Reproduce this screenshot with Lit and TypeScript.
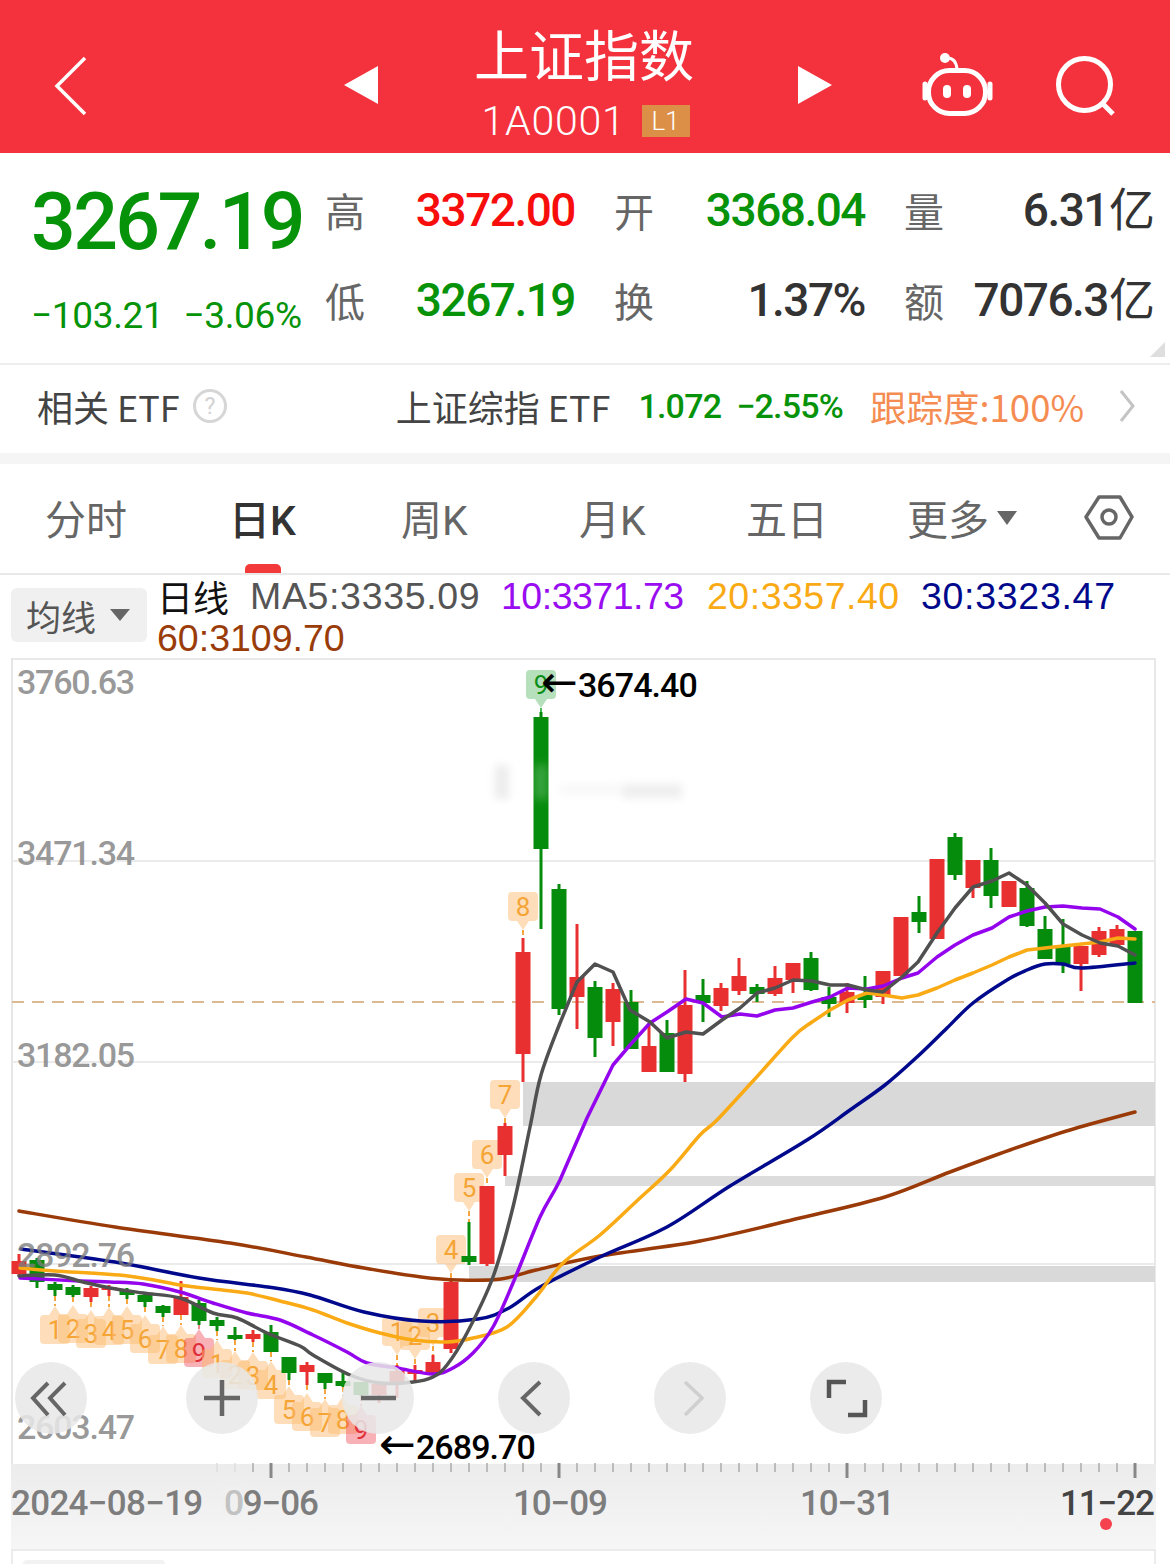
import { LitElement, html, css, svg } from "lit";
import { customElement } from "lit/decorators.js";

type Candle = [number, number, number, number, number]; // up(1)/down(0), bodyTop, bodyBottom, wickTop, wickBottom
const C: Candle[] = [
  [1,1261,1274,1254,1276],[0,1260,1282,1258,1288],[0,1284,1290,1282,1296],[0,1287,1295,1285,1297],[1,1288,1297,1286,1302],
  [1,1287,1290,1285,1296],[0,1290,1295,1288,1299],[0,1295,1302,1292,1307],[0,1306,1313,1305,1317],[1,1297,1315,1281,1315],
  [0,1303,1321,1300,1325],[0,1320,1326,1317,1331],[0,1335,1339,1327,1340],[1,1334,1339,1330,1342],[0,1332,1352,1325,1352],
  [0,1357,1373,1357,1380],[1,1365,1372,1362,1385],[0,1373,1383,1373,1389],[0,1381,1386,1373,1387],[0,1382,1395,1382,1396],
  [1,1384,1395,1384,1403],[1,1371,1383,1365,1398],[1,1370,1374,1365,1383],[1,1362,1373,1355,1375],[1,1282,1349,1279,1353],
  [0,1256,1262,1222,1265],[1,1186,1264,1186,1266],[1,1126,1155,1123,1176],[1,952,1054,938,1082],[0,717,849,712,929],
  [0,889,1009,884,1015],[1,977,997,924,1029],[0,987,1038,981,1057],[1,989,1022,983,1046],[0,1002,1049,990,1049],
  [1,1046,1072,1025,1072],[0,1033,1072,1020,1072],[1,1005,1074,970,1082],[0,995,1003,979,1022],[1,988,1006,983,1011],
  [1,976,991,958,995],[0,987,994,984,1002],[1,978,994,966,996],[1,963,980,963,993],[0,958,990,952,991],
  [0,997,1004,987,1017],[1,992,1003,983,1013],[0,995,1000,976,1008],[1,971,997,971,1004],[1,917,976,917,976],
  [0,912,922,896,933],[1,859,939,859,939],[0,837,875,833,880],[1,860,888,860,898],[0,860,896,848,908],
  [1,881,907,881,907],[0,888,926,881,927],[0,929,959,916,959],[0,947,964,919,973],[1,946,964,946,991],
  [1,931,955,927,957],[1,929,945,925,947],[0,931,1003,931,1003],
];
const cx = (i: number) => 19 + 18 * i;

const MA5 = "19,1276 55,1275 83,1282 110,1288 143,1293 180,1298 213,1313 237,1318 267,1333 300,1346 313,1355 350,1375 380,1383 413,1382 433,1377 447,1365 467,1333 493,1277 513,1207 530,1127 541,1075 560,1023 577,982 595,964 613,972 630,1010 650,1022 667,1038 686,1032 703,1034 722,1020 740,1008 757,993 775,988 793,980 812,981 830,985 848,985 867,990 883,992 902,977 918,962 937,933 955,908 973,887 992,881 1009,873 1027,885 1045,903 1063,924 1082,935 1100,943 1118,946 1135,955";
const MA10 = "20,1278 80,1281 110,1282 143,1284 180,1292 213,1303 247,1313 280,1320 313,1335 347,1352 367,1363 397,1368 433,1374 453,1368 473,1353 493,1327 513,1283 540,1217 560,1180 587,1118 613,1065 630,1045 650,1023 667,1012 686,999 703,1003 722,1017 740,1014 757,1016 775,1010 793,1008 812,1002 830,997 848,988 867,989 883,986 902,978 918,973 937,957 955,945 973,935 992,928 1009,917 1027,911 1045,907 1063,906 1082,908 1100,909 1118,917 1135,929";
const MA20 = "20,1268 55,1271 128,1276 180,1285 213,1289 247,1293 280,1301 313,1310 347,1323 380,1333 413,1340 447,1342 473,1338 507,1327 536,1297 563,1263 600,1235 640,1198 670,1170 700,1135 717,1120 753,1081 793,1037 812,1022 830,1010 848,1000 867,993 883,995 902,998 918,995 937,988 955,980 973,973 992,965 1009,957 1027,950 1045,948 1063,946 1082,944 1100,942 1118,938 1135,939";
const MA30 = "21,1249 115,1262 199,1278 268,1287 310,1295 364,1312 421,1321 478,1319 509,1308 540,1287 600,1257 667,1227 730,1186 807,1140 850,1110 885,1085 917,1057 947,1028 973,1003 1007,980 1027,970 1045,964 1063,964 1082,968 1135,963";
const MA60 = "19,1211 115,1227 230,1243 306,1257 364,1268 421,1277 459,1280 501,1279 536,1270 600,1256 700,1241 800,1218 885,1197 950,1172 1010,1150 1070,1130 1135,1112";

function smooth(pts: string, limit: number): string {
  const p = pts.split(" ").map((s) => s.split(",").map(Number));
  let d = `M${p[0][0]} ${p[0][1]}`;
  for (let i = 0; i < p.length - 1; i++) {
    const p0 = p[Math.max(0, i - 1)], p1 = p[i], p2 = p[i + 1], p3 = p[Math.min(p.length - 1, i + 2)];
    if (p1[0] >= limit) { d += `L${p2[0]} ${p2[1]}`; continue; }
    const a = [p1[0] + (p2[0] - p0[0]) / 6, p1[1] + (p2[1] - p0[1]) / 6];
    const b = [p2[0] - (p3[0] - p1[0]) / 6, p2[1] - (p3[1] - p1[1]) / 6];
    d += `C${a[0].toFixed(1)} ${a[1].toFixed(1)} ${b[0].toFixed(1)} ${b[1].toFixed(1)} ${p2[0]} ${p2[1]}`;
  }
  return d;
}

// [candle index, digit, text centre y, kind]
type Tag = [number, string, number, "down" | "up"];
const TAGS: Tag[] = [
  [2,"1",1330,"down"],[3,"2",1329,"down"],[4,"3",1334,"down"],[5,"4",1331,"down"],[6,"5",1330,"down"],[7,"6",1339,"down"],[8,"7",1350,"down"],[9,"8",1349,"down"],[10,"9",1353,"down"],
  [11,"1",1364,"down"],[12,"2",1375,"down"],[13,"3",1376,"down"],[14,"4",1385,"down"],[15,"5",1410,"down"],[16,"6",1417,"down"],[17,"7",1423,"down"],[18,"8",1420,"down"],[19,"9",1430,"down"],
  [21,"1",1332,"up"],[22,"2",1336,"up"],[23,"3",1323,"up"],[24,"4",1250,"up"],[25,"5",1188,"up"],[26,"6",1155,"up"],[27,"7",1095,"up"],[28,"8",907,"up"],[29,"9",685,"up"],
];

const tickXs: number[] = [];
for (let x = 217; x <= 1135; x += 18) tickXs.push(x);

const BUTTONS = [
  { x: 51, icon: svg`<path d="M33 21 18 36l15 17M50 21 35 36l15 17" stroke="#666" stroke-width="4" fill="none"/>` },
  { x: 222, icon: svg`<path d="M18 36h36M36 18v36" stroke="#666" stroke-width="4.5" fill="none"/>` },
  { x: 378, icon: svg`<path d="M19 36h35" stroke="#666" stroke-width="4.5" fill="none"/>` },
  { x: 534, icon: svg`<path d="M42 20 25 36l17 17" stroke="#666" stroke-width="4" fill="none"/>` },
  { x: 690, icon: svg`<path d="M31 20l17 16-17 17" stroke="#cfcfcf" stroke-width="3.5" fill="none"/>` },
  { x: 846, icon: svg`<path d="M19 36V20h17M38 53h17V38" stroke="#555" stroke-width="4.5" fill="none"/>` },
];

@customElement("app-root")
export class AppRoot extends LitElement {
  static styles = css`
    :host { display: block; width: 1170px; height: 1564px; overflow: hidden; background: #fff; font-family: "Roboto", "Noto Sans CJK SC", sans-serif; }
    .header { height: 153px; background: #f3323d; color: #fff; display: grid; grid-template-columns: 344px 34px 98px 216px 106px 34px 91px 68px 66px 1fr; align-items: start; }
    .header svg { display: block; overflow: visible; }
    .back { padding: 56px 0 0 54px; }
    .tri { padding-top: 66px; }
    .robot { padding-top: 50px; }
    .search { padding-top: 52px; }
    .titlebox { display: flex; flex-direction: column; align-items: center; }
    .title { font-family: "Noto Sans CJK SC", sans-serif; font-size: 55px; line-height: 62px; font-weight: 400; margin-top: 21px; white-space: nowrap; }
    .code { display: flex; align-items: center; gap: 16px; height: 36px; margin: 20px 0 0 3px; white-space: nowrap; }
    .code b { font-weight: 300; font-size: 41px; letter-spacing: 0.8px; }
    .badge { width: 48px; height: 32px; background: #dc8f47; color: #fff; font-size: 26px; text-align: center; line-height: 33px; font-weight: 300; }
    .quote { height: 210px; display: grid; grid-template-columns: 325px 1fr; box-sizing: border-box; position: relative; }
    .left { padding-left: 31px; }
    .price { font-size: 80px; font-weight: 500; color: #069309; line-height: 94px; letter-spacing: -2.7px; margin-top: 22px; height: 108px; white-space: nowrap; transform: scaleX(0.985); transform-origin: left center; }
    .change { color: #069309; font-size: 37px; line-height: 42px; display: flex; gap: 20px; white-space: nowrap; letter-spacing: -0.35px; margin-top: 12px; }
    .stats { display: grid; grid-template-columns: 250px 251px 251px; column-gap: 39px; grid-auto-rows: 90px; padding-top: 12px; }
    .stat { display: flex; justify-content: space-between; align-items: center; }
    .lab { font-family: "Noto Sans CJK SC", sans-serif; font-size: 40px; color: #666; line-height: 90px; }
    .val { font-size: 46px; line-height: 50px; font-weight: 500; letter-spacing: -1.5px; color: #333; white-space: nowrap; }
    .val span { font-family: "Noto Sans CJK SC", sans-serif; font-size: 46px; line-height: 0; font-weight: 400; letter-spacing: 0; margin-left: 1px; }
    .red { color: #f80d0d; }
    .green { color: #069309; }
    .corner { position: absolute; right: 5px; bottom: 6px; width: 0; height: 0; border-left: 15px solid transparent; border-bottom: 15px solid #dedede; }
    .etf { border-top: 2px solid #eee; display: flex; align-items: center; box-sizing: border-box; height: 90px; padding: 0 0 6px 37px; white-space: nowrap; }
    .etf-name { font-family: "Noto Sans CJK SC", sans-serif; font-size: 36px; color: #444; }
    .q { margin-left: 12px; display: block; }
    .etf-right { margin-left: 168px; display: flex; align-items: center; }
    .etf-num { font-size: 34px; color: #069309; font-weight: 500; letter-spacing: -0.8px; margin-left: 28px; display: flex; gap: 15px; }
    .etf-track { font-family: "Noto Sans CJK SC", sans-serif; font-size: 36.5px; color: #f58c52; margin-left: 27px; }
    .etf-chev { margin-left: 35px; display: block; }
    .gap { height: 11px; background: #f5f5f5; }
    .tabs { height: 109px; display: grid; grid-template-columns: 45px 184px 172px 178px 167px 161px 176px 1fr; align-items: center; position: relative; box-sizing: border-box; padding-bottom: 4px; }
    .tab { font-family: "Noto Sans CJK SC", sans-serif; font-size: 41px; color: #666; white-space: nowrap; }
    .tab.on { color: #333; font-weight: 500; }
    .tab i { font-family: "Roboto", sans-serif; font-style: normal; }
    .more { display: flex; align-items: center; gap: 8px; }
    .more svg { margin-top: 2px; }
    .hex { display: block; margin-top: 2px; }
    .ind { position: absolute; left: 245px; bottom: 0; width: 36px; height: 9px; background: #f33a3a; border-radius: 5px 5px 0 0; }
    .legend { height: 85px; border-top: 2px solid #e9e9e9; box-sizing: border-box; padding: 0 0 0 11px; display: flex; align-items: flex-start; gap: 10px; }
    .ma-btn { margin-top: 13px; width: 136px; height: 54px; background: #f0f0f0; border-radius: 6px; display: flex; align-items: center; gap: 14px; padding-left: 15px; box-sizing: border-box; font-family: "Noto Sans CJK SC", sans-serif; font-size: 35px; color: #555; flex: none; }
    .ma-btn::after { content: ""; border-left: 10px solid transparent; border-right: 10px solid transparent; border-top: 12px solid #666; }
    .ma-text { font-size: 37.5px; line-height: 42px; width: 990px; font-family: "Liberation Sans", sans-serif; }
    .ma-text .row { display: flex; white-space: nowrap; height: 42px; align-items: center; }
    .ma-text .d { font-family: "Noto Sans CJK SC", sans-serif; font-size: 36px; color: #111; width: 93px; flex: none; }
    .m5 { color: #555; width: 251px; flex: none; letter-spacing: 0.65px; }
    .m10 { color: #9a0df0; width: 206px; flex: none; letter-spacing: -0.5px; }
    .m20 { color: #f9aa14; width: 214px; flex: none; letter-spacing: 0.5px; }
    .m30 { color: #00098c; letter-spacing: 0.7px; }
    .m60 { color: #9a3c0a; }
    .chart { position: relative; height: 906px; }
    .chart > svg { display: block; }
    .b { position: absolute; top: 704px; width: 72px; height: 72px; border-radius: 50%; background: rgba(232,232,232,0.86); }
    .b svg { display: block; }
    text { font-family: "Roboto", sans-serif; }
    .arrow { font-family: "DejaVu Sans", sans-serif; font-weight: 400; }
  `;

  private tags() {
    return TAGS.map(([i, d, y, k]) => {
      const x = cx(i);
      const c = C[i];
      const isRed = d === "9" && k === "down";
      const isGreen = d === "9" && k === "up";
      const fill = isRed ? "rgba(238,70,80,.42)" : isGreen ? "rgba(30,160,50,.33)" : "rgba(252,186,110,.48)";
      const col = isRed ? "#e0303a" : isGreen ? "#0c8f18" : "#f5a436";
      const top = y - 15, bot = y + 14;
      const shape = k === "up"
        ? `M${x - 11} ${top}h22q4 0 4 4v21q0 4-4 4h-5l-6 9-6-9h-5q-4 0-4-4v-21q0-4 4-4z`
        : `M${x - 11} ${bot}h22q4 0 4-4v-21q0-4-4-4h-5l-6-9-6 9h-5q-4 0-4 4v21q0 4 4 4z`;
      const y1 = k === "up" ? bot + 9 : c[4];
      const y2 = k === "up" ? c[3] : top - 9;
      return svg`<path d=${shape} fill=${fill}/>
        <line x1=${x} x2=${x} y1=${y1} y2=${y2} stroke=${isRed ? "#e88" : isGreen ? "#4b5" : "#f5a540"} stroke-width="2" stroke-dasharray="5 3"/>
        <text x=${x} y=${y + 9} text-anchor="middle" font-size="26" fill=${col}>${d}</text>`;
    });
  }

  private candles() {
    return C.map((c, i) => {
      const x = cx(i);
      const col = c[0] ? "#e93030" : "#068c0d";
      return svg`<rect x=${x - 1.5} y=${c[3]} width="3" height=${c[4] - c[3]} fill=${col}/>
        <rect x=${x - 7.5} y=${c[1]} width="15" height=${c[2] - c[1]} fill=${col}/>`;
    });
  }

  private chart() {
    const line = (pts: string, col: string, limit: number) =>
      svg`<path d=${smooth(pts, limit)} fill="none" stroke=${col} stroke-width="3.5" stroke-linejoin="round" stroke-linecap="round"/>`;
    const axisLabel = (t: string, y: number) =>
      svg`<text x="17" y=${y} font-size="34" font-weight="500" letter-spacing="-1.2" fill="rgba(125,125,125,.8)">${t}</text>`;
    const date = (t: string, x: number, col: string, ls = -1.1) =>
      svg`<text x=${x} y="1515" font-size="35" font-weight="500" letter-spacing=${ls} fill=${col}>${t}</text>`;
    const peak = (x: number, y: number, t: string) =>
      svg`<text x=${x} y=${y} font-size="34" font-weight="500" letter-spacing="-0.9" fill="#000"><tspan class="arrow" font-size="44" letter-spacing="0">←</tspan>${t}</text>`;
    return svg`
      <defs>
        <linearGradient id="ax" x1="0" y1="0" x2="0" y2="1"><stop offset="0" stop-color="#ececec"/><stop offset="1" stop-color="#f6f6f6"/></linearGradient>
        <filter id="bl" x="-30%" y="-30%" width="160%" height="160%"><feGaussianBlur stdDeviation="4"/></filter>
      </defs>
      <rect x="11" y="658" width="1145" height="2" fill="#e9e9e9"/>
      <rect x="11" y="658" width="2" height="806" fill="#e6e6e6"/>
      <rect x="1154" y="658" width="2" height="806" fill="#e9e9e9"/>
      ${[860, 1061, 1263].map((y) => svg`<rect x="12" y=${y} width="1143" height="2" fill="#ebebeb"/>`)}
      <rect x="523" y="1082" width="632" height="44" fill="#d9d9d9"/>
      <rect x="505" y="1176" width="650" height="10" fill="#dcdcdc"/>
      <rect x="469" y="1266" width="686" height="16" fill="#d9d9d9"/>
      <line x1="12" x2="1155" y1="1002" y2="1002" stroke="#dcb893" stroke-width="2" stroke-dasharray="12 8"/>
      ${this.tags()}
      ${this.candles()}
      <g filter="url(#bl)">
        <rect x="495" y="765" width="14" height="34" fill="#ececec"/>
        <rect x="534" y="765" width="14" height="34" fill="#fff" fill-opacity=".2"/>
        <rect x="560" y="785" width="60" height="8" fill="#f6f6f6"/>
        <rect x="622" y="784" width="60" height="14" fill="#eeeeee"/>
      </g>
      ${line(MA60, "#9a3a08", 2000)}
      ${line(MA30, "#00098c", 2000)}
      ${line(MA20, "#f9aa14", 800)}
      ${line(MA10, "#9405ee", 560)}
      ${line(MA5, "#505050", 560)}
      ${axisLabel("3760.63", 694)}
      ${axisLabel("3471.34", 865)}
      ${axisLabel("3182.05", 1067)}
      ${axisLabel("2892.76", 1267)}
      ${axisLabel("2603.47", 1439)}
      ${peak(541, 697, "3674.40")}
      ${peak(379, 1459, "2689.70")}
      <rect x="11" y="1464" width="1145" height="86" fill="url(#ax)"/>
      ${tickXs.map((x) => {
        const major = (x - 271) % 288 === 0;
        return svg`<rect x=${major ? x - 1.5 : x - 0.75} y="1463" width=${major ? 3 : 1.5} height=${major ? 15 : 9} fill=${major ? "#888" : x < 240 ? "#ddd" : "#aaa"}/>`;
      })}
      ${date("2024−08−19", 11, "#7d7d7d", -0.7)}
      ${date("09−06", 224, "#7d7d7d")}
      <rect x="222" y="1486" width="20" height="30" fill="#f0f0f0" fill-opacity=".6"/>
      ${date("10−09", 513, "#7d7d7d")}
      ${date("10−31", 800, "#7d7d7d")}
      ${date("11−22", 1060, "#444")}
      <circle cx="1106" cy="1524" r="6" fill="#f4434e"/>
      <rect x="11" y="1549" width="1145" height="2" fill="#ebebeb"/>
      <rect x="11" y="1551" width="2" height="13" fill="#ececec"/>
      <rect x="1154" y="1551" width="2" height="13" fill="#ececec"/>
      <rect x="23" y="1560" width="142" height="10" rx="4" fill="#f2f2f2"/>
    `;
  }

  render() {
    return html`
      <div class="header">
        <div class="back"><svg width="36" height="60" viewBox="0 0 36 60"><path d="M31 2 3 30l28 28" fill="none" stroke="#fff" stroke-width="3.5"/></svg></div>
        <div class="tri"><svg width="34" height="38"><path d="M34 0v38L0 19z" fill="#fff"/></svg></div>
        <div></div>
        <div class="titlebox">
          <div class="title">上证指数</div>
          <div class="code"><b>1A0001</b><span class="badge">L1</span></div>
        </div>
        <div></div>
        <div class="tri"><svg width="34" height="38"><path d="M0 0v38l34-19z" fill="#fff"/></svg></div>
        <div></div>
        <div class="robot"><svg width="72" height="70" viewBox="0 0 72 70"><circle cx="22" cy="8" r="5" fill="#fff"/><path d="M24 8q9 0 10 11" fill="none" stroke="#fff" stroke-width="3"/><rect x="5.5" y="20.5" width="57" height="43" rx="21" fill="none" stroke="#fff" stroke-width="5"/><path d="M2 34v14M67 34v14" stroke="#fff" stroke-width="5" stroke-linecap="round"/><rect x="20" y="35" width="8" height="13" rx="4" fill="#fff"/><rect x="40" y="35" width="8" height="13" rx="4" fill="#fff"/></svg></div>
        <div></div>
        <div class="search"><svg width="66" height="66" viewBox="0 0 66 66"><circle cx="27.5" cy="32.5" r="26" fill="none" stroke="#fff" stroke-width="5"/><path d="M46 52l10 10" stroke="#fff" stroke-width="5"/></svg></div>
      </div>

      <div class="quote">
        <div class="left">
          <div class="price">3267.19</div>
          <div class="change"><span>−103.21</span><span>−3.06%</span></div>
        </div>
        <div class="stats">
          <div class="stat"><span class="lab">高</span><span class="val red">3372.00</span></div>
          <div class="stat"><span class="lab">开</span><span class="val green">3368.04</span></div>
          <div class="stat"><span class="lab">量</span><span class="val">6.31<span>亿</span></span></div>
          <div class="stat"><span class="lab">低</span><span class="val green">3267.19</span></div>
          <div class="stat"><span class="lab">换</span><span class="val">1.37%</span></div>
          <div class="stat"><span class="lab">额</span><span class="val">7076.3<span>亿</span></span></div>
        </div>
        <div class="corner"></div>
      </div>

      <div class="etf">
        <span class="etf-name">相关 ETF</span>
        <svg class="q" width="36" height="36" viewBox="0 0 36 36"><circle cx="18" cy="18" r="15.5" fill="none" stroke="#d6d6d6" stroke-width="3"/><text x="18" y="26" text-anchor="middle" font-size="23" fill="#d2d2d2">?</text></svg>
        <div class="etf-right">
          <span class="etf-name">上证综指 ETF</span>
          <span class="etf-num"><span>1.072</span><span>−2.55%</span></span>
          <span class="etf-track">跟踪度:100%</span>
          <svg class="etf-chev" width="16" height="32" viewBox="0 0 16 32"><path d="M2 1l12 15L2 31" fill="none" stroke="#c4c4c4" stroke-width="3"/></svg>
        </div>
      </div>
      <div class="gap"></div>

      <div class="tabs">
        <div></div>
        <div class="tab">分时</div>
        <div class="tab on">日<i>K</i></div>
        <div class="tab">周<i>K</i></div>
        <div class="tab">月<i>K</i></div>
        <div class="tab">五日</div>
        <div class="tab more">更多<svg width="20" height="14"><path d="M0 0h20L10 14z" fill="#666"/></svg></div>
        <div><svg class="hex" width="52" height="48" viewBox="0 0 52 48"><path d="M2 22 15 2h21l12 20-12 21H15z" transform="translate(1 1)" fill="none" stroke="#666" stroke-width="3.5" stroke-linejoin="round"/><circle cx="26" cy="23" r="7" fill="none" stroke="#666" stroke-width="3.5"/></svg></div>
        <div class="ind"></div>
      </div>

      <div class="legend">
        <div class="ma-btn">均线</div>
        <div class="ma-text">
          <div class="row"><span class="d">日线</span><span class="m5">MA5:3335.09</span><span class="m10">10:3371.73</span><span class="m20">20:3357.40</span><span class="m30">30:3323.47</span></div>
          <div class="row"><span class="m60">60:3109.70</span></div>
        </div>
      </div>

      <div class="chart">
        <svg width="1170" height="906" viewBox="0 658 1170 906">${this.chart()}</svg>
        ${BUTTONS.map((b) => html`<div class="b" style="left:${b.x - 36}px"><svg width="72" height="72" viewBox="0 0 72 72">${b.icon}</svg></div>`)}
      </div>
    `;
  }
}
